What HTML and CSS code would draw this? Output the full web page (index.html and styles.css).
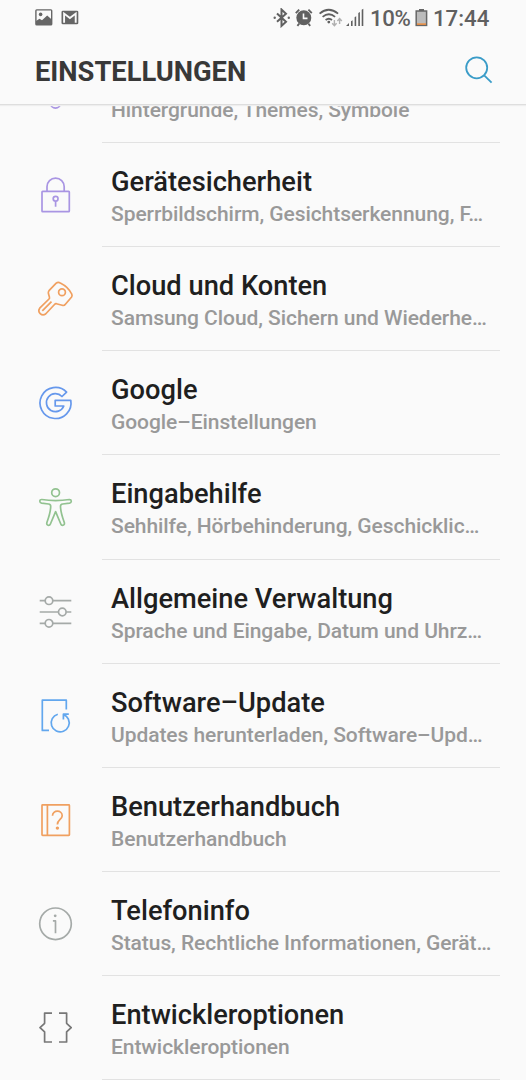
FILE: index.html
```html
<!DOCTYPE html>
<html lang="de">
<head>
<meta charset="utf-8">
<title>Einstellungen</title>
<link rel="stylesheet" href="styles.css">
</head>
<body>
<div class="screen">
  <header class="header">
    <div class="status">
      <svg class="s-picture" width="18" height="18" viewBox="0 0 18 18"><rect x=".9" y=".9" width="15.8" height="14.8" rx=".8" fill="none" stroke="#666" stroke-width="1.4"/><circle cx="5.6" cy="5.4" r="1.8" fill="#666"/><path d="M1 12l3.5-2.3 2.5 1.6 5.2-4.8 4.5 4V16H1z" fill="#666"/></svg>
      <svg class="s-mail" width="18" height="18" viewBox="0 0 18 18"><rect x=".5" y="1.7" width="16.8" height="13.6" rx="1.4" fill="#666"/><path d="M3.1 13.7V4.6L8.9 9l5.8-4.4v9.1" fill="none" stroke="#fafafa" stroke-width="1.9"/></svg>
      <span class="spacer"></span>
      <svg class="s-bt" width="18" height="20" viewBox="0 0 18 20"><path d="M4 5.5l9 8.3-4.5 4.1V1.5L13 5.7l-9 8.1" fill="none" stroke="#606060" stroke-width="2"/><circle cx="1.7" cy="9.7" r="1.2" fill="#666"/><circle cx="15.8" cy="9.7" r="1.2" fill="#666"/></svg>
      <svg class="s-alarm" width="18" height="20" viewBox="0 0 18 20"><circle cx="8.8" cy="9.8" r="7.5" fill="#606060"/><path d="M.8 5.2l3.4-3.5M13.4 1.7l3.4 3.5M4.3 15.5l-1.9 2.3M13.3 15.5l1.9 2.3" stroke="#606060" stroke-width="1.9"/><path d="M8.5 5.4v5h4" fill="none" stroke="#fafafa" stroke-width="1.6"/></svg>
      <svg class="s-wifi" width="24" height="20" viewBox="0 0 24 20"><g fill="none" stroke="#606060" stroke-width="1.8"><path d="M.6 5.6q9-7.8 18.5 0M3.6 8.9q6.3-5.3 12.5 0M6.6 12q3.2-2.6 6.4 0"/></g><circle cx="9.8" cy="14.1" r="1.4" fill="#606060"/><path d="M15.4 12v5M13.2 15.2l2.2 2.5 2.2-2.5M20.6 16v-5M18.4 13l2.2-2.5 2.2 2.5" fill="none" stroke="#b0b0b0" stroke-width="1.4"/></svg>
      <svg class="s-signal" width="18" height="20" viewBox="0 0 18 20"><path d="M0 18l3-3v3zM5 13.2l1.6-1V18H5zM8.6 9.2l1.6-1V18H8.6zM12.3 5l1.6-1v14h-1.6zM15.7 1.7l1.6-.9V18h-1.6z" fill="#606060"/></svg>
      <span class="percent">10%</span>
      <svg class="s-battery" width="13" height="20" viewBox="0 0 13 20"><path d="M4 1h5v2.2H4z" fill="#666"/><rect x="1.2" y="3" width="10.4" height="14.4" fill="#bbb" stroke="#666" stroke-width="1.5"/><path d="M2 15.4h9v1.4H2z" fill="#f28a35"/></svg>
      <span class="clock">17:44</span>
    </div>
    <div class="titlebar">
      <h1 class="title">EINSTELLUNGEN</h1>
      <svg class="search" width="28" height="28" viewBox="0 0 28 28"><circle cx="11.7" cy="11.8" r="10.5"/><path d="M19.2 19.3l7.4 7.3"/></svg>
    </div>
  </header>
  <main class="viewport">
    <ul class="list">
      <li class="row partial"><svg class="icon purple" viewBox="-24 -24 48 48"><path d="M-4.4 12.3a4.8 4.8 0 0 0 9.8 0z"/></svg><div class="text"><p class="desc">Hintergründe, Themes, Symbole</p></div></li>
      <li class="row"><svg class="icon purple" viewBox="-24 -24 48 48"><rect x="-13" y="-3.6" width="27.3" height="20.2" rx=".7"/><path d="M-8 -3.6v-4.7a8.6 8.6 0 0 1 17.2 0v4.7M.6 6.2v5.6"/><circle cx=".6" cy="3.7" r="2.4"/></svg><div class="text"><h2 class="name">Gerätesicherheit</h2><p class="desc">Sperrbildschirm, Gesichtserkennung, F…</p></div></li>
      <li class="row"><svg class="icon orange" viewBox="-24 -24 48 48"><path d="M1.2-15.8Q3-17.4 5.3-16.1Q13.5-12 16.7-5Q17.5-3.5 16.6-2L10.4 5.3Q9.2 7 7.2 6.3L1.3 4.7Q.4 4.5-.5 5.5L-9.4 15A4.2 4.2 0 0 1-15.3 9.2L-6 0Q-5.2-.8-5.6-2.1L-6.6-5.4Q-7-7-6-8.3zM-12.7 11.8l9.2-9.2"/><circle cx="7" cy="-6.7" r="3.4"/></svg><div class="text"><h2 class="name">Cloud und Konten</h2><p class="desc">Samsung Cloud, Sichern und Wiederhe…</p></div></li>
      <li class="row"><svg class="icon blue" viewBox="-24 -24 48 48"><path d="M11.6-10.9A15.5 15.5 0 1 0 15.8-2.7H.2V3H8.8A9 9 0 1 1 7-6.5z"/></svg><div class="text"><h2 class="name">Google</h2><p class="desc">Google–Einstellungen</p></div></li>
      <li class="row"><svg class="icon green" viewBox="-24 -24 48 48"><circle cx=".6" cy="-14.3" r="3.9"/><path d="M-13.2-7.5Q.6-5.2 14.4-7.5C16.8-7.6 16.9-4.4 14.6-3.9L7.6-3Q5.5-2.7 5.5-.8C5.5 5 7.3 10 9.3 15.5C10.2 18.8 6.5 19 5.8 17L.6 4.7-4.6 17C-5.4 19-9 18.8-8.1 15.5C-6.1 10-4.3 5-4.3-.8Q-4.3-2.7-6.4-3L-13.4-3.9C-15.9-4.4-15.7-7.7-13.2-7.5z"/></svg><div class="text"><h2 class="name">Eingabehilfe</h2><p class="desc">Sehhilfe, Hörbehinderung, Geschicklic…</p></div></li>
      <li class="row"><svg class="icon gray" viewBox="-24 -24 48 48"><path d="M-15.3-11.3h5.4M-2.1-11.3h18.4M-15.3 0H3.4M11.2 0h5.1M-15.3 11.3h5.4M-2.1 11.3h18.4"/><circle cx="-6" cy="-11.3" r="3.8"/><circle cx="7.3" cy="0" r="3.8"/><circle cx="-6" cy="11.3" r="3.8"/></svg><div class="text"><h2 class="name">Allgemeine Verwaltung</h2><p class="desc">Sprache und Eingabe, Datum und Uhrz…</p></div></li>
      <li class="row"><svg class="icon sky" viewBox="-24 -24 48 48"><path d="M11.3-6.5v-9.3H-12.7V14.4H-6M2.8-1.8A9 9 0 1 0 13.4 3.2Q11.8-.2 8.7-1.4M13.8-1.8H8.4V3.5"/></svg><div class="text"><h2 class="name">Software–Update</h2><p class="desc">Updates herunterladen, Software–Upd…</p></div></li>
      <li class="row"><svg class="icon orange" viewBox="-24 -24 48 48"><rect x="-13" y="-15.2" width="27.4" height="30.6" rx=".6"/><path d="M-7.6-15.2v30.6M-2.5-4.3C-2.5-10.3 7.2-10.3 7.2-4.3C7.2-.8 2.4-.2 2.4 4.4"/><circle class="dot" cx="2.4" cy="8.1" r="1.7"/></svg><div class="text"><h2 class="name">Benutzerhandbuch</h2><p class="desc">Benutzerhandbuch</p></div></li>
      <li class="row"><svg class="icon gray" viewBox="-24 -24 48 48"><circle cx=".5" cy="-.2" r="15.8"/><path d="M-2.1-3.1H.5V9.3"/><circle class="dot" cx=".2" cy="-8.2" r="1.4"/></svg><div class="text"><h2 class="name">Telefoninfo</h2><p class="desc">Status, Rechtliche Informationen, Gerät…</p></div></li>
      <li class="row"><svg class="icon dark" viewBox="-24 -24 48 48"><path d="M-3-14.9H-10.4V-4.7L-15-.4-10.4 3.9V14H-3M4-14.9H11.6V-4.7L16.2-.4 11.6 3.9V14H4"/></svg><div class="text"><h2 class="name">Entwickleroptionen</h2><p class="desc">Entwickleroptionen</p></div></li>
    </ul>
  </main>
</div>
</body>
</html>
```
FILE: styles.css
```css
* { box-sizing: border-box; }
body { margin: 0; background: #fafafa; font-family: Roboto, "Liberation Sans", sans-serif; }
.screen { width: 526px; height: 1080px; display: flex; flex-direction: column; overflow: hidden; }
.header { height: 105px; flex: none; border-bottom: 1px solid #dedede; box-shadow: 0 1px 1px #eee; z-index: 1; }
.status { height: 36px; padding: 0 36px 0 35px; display: flex; align-items: center; color: #606060; font-size: 22.2px; font-weight: 500; line-height: 36px; }
.status svg { flex: none; }
.s-mail { margin-left: 8px; }
.spacer { flex: 1; }
.s-alarm { margin-left: 4px; }
.s-wifi { margin-left: 6px; }
.s-signal { margin-left: 3px; }
.percent { width: 43px; margin-left: 6px; letter-spacing: -.3px; }
.s-battery { margin-left: 2px; }
.clock { width: 57px; margin-left: 5px; }
.titlebar { height: 68px; padding: 0 33px 0 35px; display: flex; justify-content: space-between; align-items: center; }
.title { margin: 4px 0 0; font-size: 27.3px; line-height: 32px; font-weight: 700; color: #383838; }
.search { fill: none; stroke: #3a9cc8; stroke-width: 1.8; }
.viewport { flex: 1; min-height: 0; overflow: hidden; }
.list { list-style: none; margin: -65.9px 0 0; padding: 0; }
.row { height: 104.1px; display: flex; padding-right: 26px; }
.icon { width: 48px; height: 48px; margin: 28px 23px 0 31px; flex: none; fill: none; stroke: currentColor; stroke-width: 1.7; stroke-linejoin: round; }
.dot { fill: currentColor; stroke: none; }
.text { flex: 1; min-width: 0; padding: 22px 0 0 9px; border-bottom: 1px solid #e2e2e2; white-space: nowrap; }
.partial .text { padding-top: 56px; }
.name { margin: 0; font-size: 27.25px; line-height: 34px; font-weight: 500; color: #1f1f1f; }
.desc { margin: 0; font-size: 21px; line-height: 30px; font-weight: 500; letter-spacing: -.065px; color: #999; }
.purple { color: #a995e3; }
.orange { color: #f0a060; }
.blue { color: #6698ec; }
.green { color: #92c290; }
.gray { color: #a5aaa8; }
.sky { color: #62a7ee; }
.dark { color: #777; }
```
